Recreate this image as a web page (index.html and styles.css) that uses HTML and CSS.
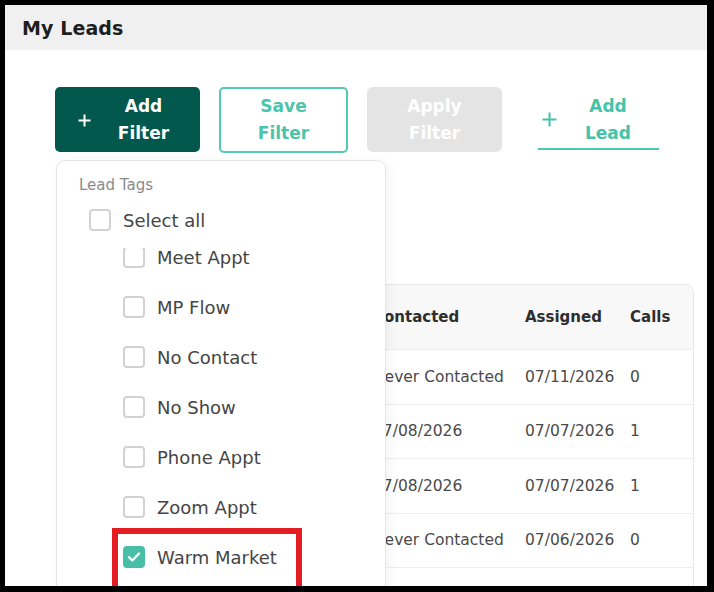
FILE: index.html
```html
<!DOCTYPE html>
<html lang="en">
<head>
<meta charset="utf-8">
<title>My Leads</title>
<link rel="stylesheet" href="styles.css">
</head>
<body>
<div class="frame">
  <div class="app">
    <header class="topbar">
      <h1 class="title">My Leads</h1>
    </header>

    <main class="content">
      <div class="toolbar">
        <button class="btn btn-primary" type="button">
          <svg class="plus" width="13" height="13" viewBox="0 0 13 13" aria-hidden="true"><path d="M6.5 0.5v12M0.5 6.5h12" stroke="currentColor" stroke-width="2" fill="none"/></svg>
          <span class="label">Add Filter</span>
        </button>
        <button class="btn btn-outline" type="button"><span class="label">Save Filter</span></button>
        <button class="btn btn-disabled" type="button" disabled><span class="label">Apply Filter</span></button>
        <button class="btn btn-link" type="button">
          <svg class="plus plus-lg" width="15" height="15" viewBox="0 0 15 15" aria-hidden="true"><path d="M7.5 0.5v14M0.5 7.5h14" stroke="currentColor" stroke-width="2" fill="none"/></svg>
          <span class="label">Add Lead</span>
        </button>

        <div class="filter-menu">
          <div class="menu-heading">Lead Tags</div>
          <label class="check-row select-all">
            <span class="box"></span>
            <span>Select all</span>
          </label>
          <div class="tag-list">
            <div class="tag-scroll">
              <label class="check-row tag"><span class="box"></span><span>Meet Appt</span></label>
              <label class="check-row tag"><span class="box"></span><span>MP Flow</span></label>
              <label class="check-row tag"><span class="box"></span><span>No Contact</span></label>
              <label class="check-row tag"><span class="box"></span><span>No Show</span></label>
              <label class="check-row tag"><span class="box"></span><span>Phone Appt</span></label>
              <label class="check-row tag"><span class="box"></span><span>Zoom Appt</span></label>
              <label class="check-row tag"><span class="box checked"><svg width="14" height="12" viewBox="0 0 14 12" aria-hidden="true"><path d="M2 6.2l3.3 3.3L12 2.5" stroke="#fff" stroke-width="2.4" fill="none" stroke-linecap="round" stroke-linejoin="round"/></svg></span><span>Warm Market</span></label>
            </div>
          </div>
        </div>
      </div>

      <div class="table-card">
        <div class="row head">
          <div class="cell">Name</div>
          <div class="cell">Phone</div>
          <div class="cell">Contacted</div>
          <div class="cell">Assigned</div>
          <div class="cell">Calls</div>
        </div>
        <div class="row">
          <div class="cell">Dana Ortiz</div>
          <div class="cell">(555) 201-4410</div>
          <div class="cell">Never Contacted</div>
          <div class="cell">07/11/2026</div>
          <div class="cell">0</div>
        </div>
        <div class="row">
          <div class="cell">Marcus Lee</div>
          <div class="cell">(555) 318-0972</div>
          <div class="cell">07/08/2026</div>
          <div class="cell">07/07/2026</div>
          <div class="cell">1</div>
        </div>
        <div class="row">
          <div class="cell">Priya Shah</div>
          <div class="cell">(555) 774-2035</div>
          <div class="cell">07/08/2026</div>
          <div class="cell">07/07/2026</div>
          <div class="cell">1</div>
        </div>
        <div class="row">
          <div class="cell">Tom Becker</div>
          <div class="cell">(555) 640-1187</div>
          <div class="cell">Never Contacted</div>
          <div class="cell">07/06/2026</div>
          <div class="cell">0</div>
        </div>
      </div>
    </main>

    <div class="highlight"></div>
  </div>
</div>
</body>
</html>
```

FILE: styles.css
```css
* {
  box-sizing: border-box;
}

html, body {
  margin: 0;
  padding: 0;
  background: #000;
}

body {
  font-family: "DejaVu Sans", "Noto Sans", sans-serif;
  color: #444;
}

/* black outline around the whole view */
.frame {
  width: 714px;
  height: 592px;
  padding: 5px 7px 6px 5px;
  background: #000;
}

.app {
  position: relative;
  width: 100%;
  height: 100%;
  background: #fff;
  overflow: hidden;
}

/* page title bar */
.topbar {
  height: 45px;
  background: #f0f0f0;
  display: flex;
  align-items: center;
  padding-left: 17px;
}

.title {
  margin: 0;
  font-size: 19px;
  font-weight: 700;
  color: #1e1e1e;
  letter-spacing: 0.1px;
}

.content {
  padding: 37px 0 0 50px;
}

/* action buttons */
.toolbar {
  position: relative;
  display: flex;
  align-items: flex-start;
  height: 66px;
}

.btn {
  font-family: inherit;
  font-size: 17px;
  font-weight: 700;
  line-height: 27px;
  border: 0;
  background: none;
  margin: 0;
  padding: 0;
  display: flex;
  align-items: center;
  cursor: pointer;
}

.label {
  width: min-content;
  text-align: center;
}

.btn-primary {
  width: 145px;
  height: 65px;
  background: #03584e;
  color: #fff;
  border-radius: 5px;
  padding: 0 4px 0 23px;
}

.btn-primary .label {
  flex: 1;
  display: flex;
  justify-content: center;
}

.btn-primary .label,
.btn-link .label {
  word-spacing: 100px;
}

.btn-outline {
  width: 129px;
  height: 66px;
  margin-left: 19px;
  border: 2px solid #52c9b2;
  color: #4cc4ab;
  border-radius: 5px;
  justify-content: center;
}

.btn-disabled {
  width: 135px;
  height: 65px;
  margin-left: 19px;
  background: #e4e4e4;
  color: #fff;
  border-radius: 6px;
  justify-content: center;
}

.btn-link {
  width: 121px;
  height: 63px;
  margin-left: 36px;
  color: #45c3a9;
  border-bottom: 2px solid #4cc8af;
  padding: 0 0 0 4px;
}

.btn-link .label {
  flex: 1;
  display: flex;
  justify-content: center;
  margin-top: 4px;
}

.plus {
  flex: none;
  margin-top: 2px;
}

.plus-lg {
  margin-top: 4px;
}

/* tag filter dropdown */
.filter-menu {
  position: absolute;
  left: 1px;
  top: 73px;
  width: 330px;
  height: 460px;
  background: #fff;
  border: 1px solid #e6e6e6;
  border-radius: 9px;
  box-shadow: 3px 2px 12px rgba(0, 0, 0, 0.05);
  padding: 14px 0 0 22px;
  z-index: 2;
}

.menu-heading {
  font-size: 15px;
  line-height: 20px;
  color: #8a8a8a;
}

.check-row {
  display: flex;
  align-items: center;
  gap: 12px;
  font-size: 18px;
  color: #454545;
}

.select-all {
  height: 30px;
  margin-top: 10px;
  padding-left: 10px;
}

.tag-list {
  margin-top: 13px;
  height: 360px;
  overflow: hidden;
}

.tag-scroll {
  margin-top: -16px;
}

.tag {
  height: 50px;
  padding-left: 44px;
}

.box {
  flex: none;
  width: 22px;
  height: 22px;
  border: 2px solid #d2d2d2;
  border-radius: 4px;
  background: #fff;
  display: flex;
  align-items: center;
  justify-content: center;
}

.box.checked {
  background: #47bfa6;
  border-color: #47bfa6;
}

/* leads table; the card runs on below the visible area */
.table-card {
  margin: 131px 0 0 5px;
  width: 634px;
  height: 340px;
  border: 1px solid #e8e8e8;
  border-radius: 8px;
  overflow: hidden;
  background: #fff;
}

.row {
  display: grid;
  grid-template-columns: 170px 132px 152px 105px 1fr;
  height: 54.5px;
  border-bottom: 1px solid #eeeeee;
  align-items: center;
  font-size: 15.5px;
  color: #4a4a4a;
}

.row.head {
  height: 65px;
  background: #f8f8f8;
  font-weight: 700;
  font-size: 15px;
  color: #2e2e2e;
}

.cell {
  padding-left: 10px;
  white-space: nowrap;
  overflow: hidden;
}

/* red callout box around the checked tag */
.highlight {
  position: absolute;
  left: 107px;
  top: 523px;
  width: 190px;
  height: 90px;
  border: 6px solid #e41d25;
  z-index: 3;
}
```
